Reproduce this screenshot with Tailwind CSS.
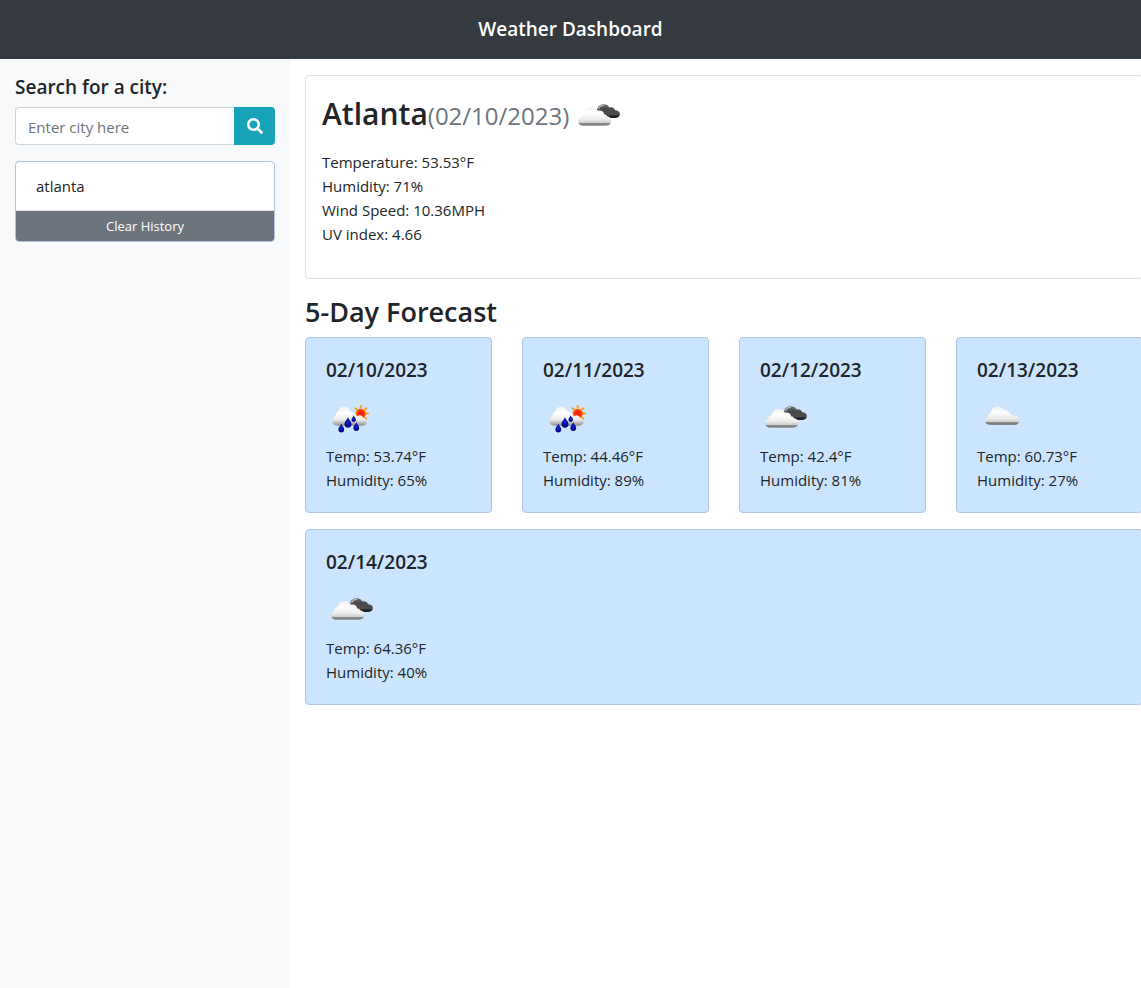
<!DOCTYPE html>
<html lang="en">
<head>
<meta charset="utf-8">
<meta name="viewport" content="width=device-width, initial-scale=1">
<title>Weather Dashboard</title>
<script src="https://cdn.jsdelivr.net/npm/@tailwindcss/browser@4"></script>
</head>
<body class="flex min-h-screen flex-col overflow-x-hidden bg-white font-['Open_Sans','Noto_Sans',sans-serif] text-[15px] leading-6 text-[#212529]">

<!-- Shared weather symbols -->
<svg class="absolute size-0" aria-hidden="true">
  <defs>
    <linearGradient id="white-cloud" x1="0" y1="0" x2="0" y2="1">
      <stop offset="0" stop-color="#f0f0f0"/><stop offset=".3" stop-color="#ffffff"/><stop offset=".65" stop-color="#ececec"/><stop offset=".83" stop-color="#cfcfcf"/><stop offset=".89" stop-color="#777777"/><stop offset="1" stop-color="#8d8d8d"/>
    </linearGradient>
    <linearGradient id="rain-cloud" x1="0" y1="0" x2="0" y2="1">
      <stop offset="0" stop-color="#f2f2f2"/><stop offset=".35" stop-color="#ffffff"/><stop offset=".7" stop-color="#e8e8e8"/><stop offset="1" stop-color="#8c8c8c"/>
    </linearGradient>
    <linearGradient id="dark-cloud" x1="0" y1="0" x2="0" y2="1">
      <stop offset="0" stop-color="#707070"/><stop offset=".35" stop-color="#484848"/><stop offset=".75" stop-color="#4c4c4c"/><stop offset=".88" stop-color="#1c1c1c"/><stop offset="1" stop-color="#2a2a2a"/>
    </linearGradient>
    <radialGradient id="sun-disc">
      <stop offset="0" stop-color="#ff1c00"/><stop offset=".6" stop-color="#ff2a08"/><stop offset="1" stop-color="#ff8a10"/>
    </radialGradient>
    <radialGradient id="drop-fill">
      <stop offset="0" stop-color="#1028d8"/><stop offset="1" stop-color="#000078"/>
    </radialGradient>
    <symbol id="broken-clouds" viewBox="0 0 50 50">
      <path fill="url(#dark-cloud)" d="M24 18c.5-3.500 3.200-5.700 6.500-5.700 2.700 0 4.800 1.200 5.900 3.200 2.700-.8 5 .5 5.600 2.700 2.800 0 4.900 1.500 4.900 3.900 0 2.200-1.800 3.900-4.300 3.900H31z"/>
      <path fill="none" stroke="#bdbdbd" stroke-width="1.400" d="M25.500 17c1-2.600 3-3.800 5.500-3.600"/>
      <path fill="url(#white-cloud)" d="M10.500 33.800C7.400 33.800 5.300 32 5.300 29.500c0-2.100 1.300-3.800 3.300-4.400-.3-2.200 1-4 3.200-4.200.7-3.500 3.300-5.800 6.700-5.800 3 0 5.300 1.400 6.400 3.700 3-.9 6 .8 6.300 3.800 1.300-.1 2.300.4 3 1.600 2.400.2 4.200 2 4.200 4.400 0 3-2.200 5.200-5.400 5.200z"/>
    </symbol>
    <symbol id="single-cloud" viewBox="0 0 50 50">
      <path fill="url(#white-cloud)" d="M12.500 30.900c-2.700 0-4.300-1.600-4.300-3.900 0-2 1.100-3.500 2.900-4.100-.1-2 1-3.500 2.800-3.900.7-4.100 3.200-6.600 6.500-6.600 2.700 0 4.900 1.300 6 3.600 3.300-.4 6 1.600 6.500 4.500 1.200-.1 2.200.4 2.900 1.400 3.400-.7 6.500 1.100 6.500 4.300 0 2.900-1.900 4.700-4.800 4.700z"/>
    </symbol>
    <symbol id="sun-rain" viewBox="0 0 50 50">
      <g stroke="#ff9c12" stroke-width="2" fill="none">
        <path d="M34.800 11.200v3M28.900 13.700l2.200 2.200M40.700 13.700l-2.200 2.200M39.800 19.600h3M38.500 23.300l2.200 2.200"/>
      </g>
      <circle cx="34.800" cy="19.700" r="5.200" fill="url(#sun-disc)"/>
      <path fill="url(#rain-cloud)" d="M12 31.700c-3.500 0-5.700-1.900-5.700-4.700 0-2.400 1.200-4.200 3.200-4.800-.1-2.200.8-3.700 2.300-4.200.8-3.300 3.300-5.300 6.300-5.300 3.100 0 5.400 1.800 6.300 4.800 2.500.2 4.300 1.600 5.200 4 .6-.2 1.500-.1 2.300.5.800-.7 2-.9 3.200-.3 1 .4 1.600 1.200 1.900 2.100 2.300.4 3.700 1.800 3.700 3.700 0 2.600-2.100 4.200-5 4.200z"/>
      <g fill="url(#drop-fill)">
        <path d="M22 23c.6 2.700 3.500 4.300 3.500 7.200 0 2.100-1.500 3.600-3.500 3.600s-3.500-1.500-3.500-3.600c0-2.900 2.900-4.500 3.500-7.200z"/>
        <path d="M15.300 29.500c.5 2.200 2.900 3.600 2.900 6 0 1.800-1.200 3-2.900 3s-2.900-1.200-2.900-3c0-2.400 2.400-3.800 2.900-6z"/>
        <path d="M30.300 28c.5 2.200 2.900 3.500 2.900 5.900 0 1.800-1.200 3-2.900 3s-2.900-1.200-2.900-3c0-2.400 2.400-3.700 2.900-5.900z"/>
        <path d="M27.700 21.300c.4 1.600 2.200 2.700 2.200 4.500 0 1.300-1 2.200-2.200 2.200s-2.200-.9-2.200-2.200c0-1.800 1.800-2.900 2.200-4.500z"/>
      </g>
    </symbol>
  </defs>
</svg>

<header class="flex h-[59px] items-center justify-center bg-[#343a40] pb-0.5 text-white">
  <h1 class="text-[19px] font-semibold">Weather Dashboard</h1>
</header>

<div class="-mr-[17px] flex grow">
  <aside class="w-[290px] shrink-0 bg-[#f8f9fa] px-[15px] pt-4">
    <form onsubmit="return false">
      <label for="city" class="mb-2 block text-[19px] font-semibold">Search for a city:</label>
      <div class="flex h-[38px]">
        <input id="city" type="text" placeholder="Enter city here" class="min-w-0 grow rounded-l border border-r-0 border-[#ced4da] bg-white px-3 pt-0.5 placeholder:text-[#6c757d]">
        <button type="submit" aria-label="Search" class="flex w-[41px] shrink-0 items-center justify-center rounded-r bg-[#17a2b8] text-white">
          <svg class="size-4" viewBox="0 0 512 512" fill="currentColor" aria-hidden="true"><path d="M505 442.700L405.300 343c-4.500-4.500-10.600-7-17-7H372c27.600-35.300 44-79.700 44-128C416 93.100 322.900 0 208 0S0 93.100 0 208s93.100 208 208 208c48.300 0 92.700-16.400 128-44v16.300c0 6.400 2.500 12.500 7 17l99.700 99.700c9.400 9.400 24.600 9.400 33.900 0l28.300-28.300c9.400-9.400 9.400-24.600.1-34zM208 336c-70.700 0-128-57.200-128-128 0-70.700 57.200-128 128-128 70.700 0 128 57.200 128 128 0 70.700-57.200 128-128 128z"/></svg>
        </button>
      </div>
    </form>
    <div class="mt-4 overflow-hidden rounded border border-[#b0c4de] bg-white">
      <ul><li class="border-b border-[#dfdfdf] px-5 py-3">atlanta</li></ul>
      <button type="button" class="block h-[30px] w-full bg-[#6c757d] text-[13px] text-white">Clear History</button>
    </div>
  </aside>

  <main class="min-w-0 grow px-[15px] pt-4">
    <section class="rounded border border-[#dee2e6] p-4">
      <h2 class="mb-2 flex h-[50px] text-[30px] leading-[44px] font-semibold"><span class="flex items-baseline">Atlanta<span class="text-[24px] font-normal text-[#6c757d]">(02/10/2023)</span></span><svg class="ml-1 size-[50px]" role="img" aria-label="Broken clouds"><use href="#broken-clouds"/></svg></h2>
      <p>Temperature: 53.53°F</p>
      <p>Humidity: 71%</p>
      <p>Wind Speed: 10.36MPH</p>
      <p class="mb-4">UV index: 4.66</p>
    </section>

    <h2 class="mt-4 mb-2 text-[27px] leading-[34px] font-semibold">5-Day Forecast</h2>
    <div class="grid grid-cols-4 gap-x-[30px] gap-y-4">
      <article class="rounded border border-[#b0c4de] bg-[#cce5ff] p-5">
        <h3 class="mb-3 text-[19px] leading-6 font-semibold">02/10/2023</h3>
        <svg class="size-[50px]" role="img" aria-label="Rain with sun"><use href="#sun-rain"/></svg>
        <p>Temp: 53.74°F</p><p>Humidity: 65%</p>
      </article>
      <article class="rounded border border-[#b0c4de] bg-[#cce5ff] p-5">
        <h3 class="mb-3 text-[19px] leading-6 font-semibold">02/11/2023</h3>
        <svg class="size-[50px]" role="img" aria-label="Rain with sun"><use href="#sun-rain"/></svg>
        <p>Temp: 44.46°F</p><p>Humidity: 89%</p>
      </article>
      <article class="rounded border border-[#b0c4de] bg-[#cce5ff] p-5">
        <h3 class="mb-3 text-[19px] leading-6 font-semibold">02/12/2023</h3>
        <svg class="size-[50px]" role="img" aria-label="Broken clouds"><use href="#broken-clouds"/></svg>
        <p>Temp: 42.4°F</p><p>Humidity: 81%</p>
      </article>
      <article class="rounded border border-[#b0c4de] bg-[#cce5ff] p-5">
        <h3 class="mb-3 text-[19px] leading-6 font-semibold">02/13/2023</h3>
        <svg class="size-[50px]" role="img" aria-label="Cloudy"><use href="#single-cloud"/></svg>
        <p>Temp: 60.73°F</p><p>Humidity: 27%</p>
      </article>
      <article class="col-span-4 rounded border border-[#b0c4de] bg-[#cce5ff] p-5">
        <h3 class="mb-3 text-[19px] leading-6 font-semibold">02/14/2023</h3>
        <svg class="size-[50px]" role="img" aria-label="Broken clouds"><use href="#broken-clouds"/></svg>
        <p>Temp: 64.36°F</p><p>Humidity: 40%</p>
      </article>
    </div>
  </main>
</div>
</body>
</html>
